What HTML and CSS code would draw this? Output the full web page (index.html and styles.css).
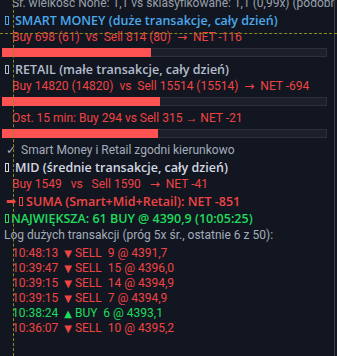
FILE: index.html
```html
<!DOCTYPE html>
<html lang="pl">
<head>
    <meta charset="UTF-8">
    <title>Przepływ zleceń</title>
    <link rel="stylesheet" href="styles.css">
</head>
<body>
    <div class="panel">
        <div class="line muted">Sr. wielkość None: 1,1 vs sklasyfikowane: 1,1 (0,99x) (podobne wielkości)</div>

        <div class="head blue"><span class="tofu"></span>SMART MONEY (duże transakcje, cały dzień)</div>
        <div class="line red">Buy 698 (61)  vs  Sell 814 (80)  <span class="to">→</span>  NET -116</div>
        <div class="bar"><div class="fill" style="width: 46.2%"></div></div>

        <div class="head gray"><span class="tofu"></span>RETAIL (małe transakcje, cały dzień)</div>
        <div class="line red">Buy 14820 (14820)  vs  Sell 15514 (15514)  <span class="to">→</span>  NET -694</div>
        <div class="bar"><div class="fill" style="width: 48.9%"></div></div>

        <div class="line red after-bar">Ost. 15 min: Buy 294 vs Sell 315 → NET -21</div>
        <div class="bar"><div class="fill" style="width: 48.3%"></div></div>

        <div class="check after-bar"><span class="tick">✓</span>Smart Money i Retail zgodni kierunkowo</div>

        <div class="head white"><span class="tofu"></span>MID (średnie transakcje, cały dzień)</div>
        <div class="line red">Buy 1549   vs   Sell 1590   <span class="to">→</span>  NET -41</div>

        <div class="head red sum"><span class="arrow">➡</span><span class="tofu"></span>SUMA (Smart+Mid+Retail): NET -851</div>
        <div class="head green big"><span class="tofu"></span>NAJWIĘKSZA: 61 BUY @ 4390,9 (10:05:25)</div>

        <div class="log">Log dużych transakcji (próg 5x śr., ostatnie 6 z 50):</div>
        <div class="trades">
            <div class="trade red">10:48:13  <span class="tri">▼</span> SELL  9 @ 4391,7</div>
            <div class="trade red">10:39:47  <span class="tri">▼</span> SELL  15 @ 4396,0</div>
            <div class="trade red">10:39:15  <span class="tri">▼</span> SELL  14 @ 4394,9</div>
            <div class="trade red">10:39:15  <span class="tri">▼</span> SELL  7 @ 4394,9</div>
            <div class="trade green">10:38:24  <span class="tri">▲</span> BUY  6 @ 4393,1</div>
            <div class="trade red">10:36:07  <span class="tri">▼</span> SELL  10 @ 4395,2</div>
        </div>
    </div>

    <div class="cross-v"></div>
    <div class="cross-h"></div>
</body>
</html>
```

FILE: styles.css
```css
html, body {
    margin: 0;
    height: 100%;
    background-color: #121620;
    overflow: hidden;
}
body {
    position: relative;
    font-family: Roboto, "Liberation Sans", "DejaVu Sans", sans-serif;
    font-size: 12px;
    line-height: 17px;
}
.panel {
    width: 335px;
    height: 362px;
    margin-top: -5px;
    padding-left: 4px;
    box-sizing: border-box;
    border-right: 1px solid #3b404d;
    overflow: hidden;
    white-space: nowrap;
}
.line, .head, .check, .log, .trade {
    white-space: pre;
}
.line {
    padding-left: 8px;
}
.to {
    font-family: "DejaVu Sans", sans-serif;
}
.head {
    font-family: "Open Sans", Roboto, sans-serif;
    font-size: 12.5px;
    font-weight: 600;
    display: flex;
    align-items: center;
}
.tofu {
    display: inline-block;
    flex: none;
    width: 2px;
    height: 7px;
    border: 1px solid currentColor;
    margin-left: 1px;
    margin-right: 6px;
}
.sum .tofu {
    margin-right: 3px;
}
.big .tofu {
    margin-right: 2px;
}
.arrow {
    font-family: "DejaVu Sans", sans-serif;
    font-size: 12px;
    margin-left: 2px;
    margin-right: 2px;
}
.bar {
    width: 325px;
    height: 9px;
    margin: 2px 0 0 -2px;
    box-sizing: border-box;
    background-color: #1c202b;
    border: 1px solid #2c303c;
    display: flex;
}
.fill {
    background-color: #ff5252;
    margin: -1px 0 -1px -1px;
}
.after-bar {
    margin-top: 4px;
}
.head.gray {
    margin-top: 4px;
}
.check {
    color: #a4adbd;
}
.tick {
    font-family: "DejaVu Sans", sans-serif;
    margin-left: 2px;
    margin-right: 5px;
}
.muted {
    color: #9aa0ac;
}
.log {
    color: #a4acbb;
}
.trades {
    margin-top: 2px;
    line-height: 15px;
}
.trade {
    padding-left: 8px;
}
.tri {
    font-family: "DejaVu Sans", sans-serif;
    font-size: 10px;
}
.blue {
    color: #4aa8ec;
}
.gray {
    color: #b3bccb;
}
.white {
    color: #d2d8e2;
}
.red {
    color: #ef4444;
}
.green {
    color: #1fdc5c;
}
.cross-v {
    position: absolute;
    left: 13px;
    top: 0;
    bottom: 0;
    border-left: 1px dashed #8b8b1c;
}
.cross-h {
    position: absolute;
    left: 0;
    right: 0;
    top: 33px;
    border-top: 1px dashed #8b8b1c;
}
```
